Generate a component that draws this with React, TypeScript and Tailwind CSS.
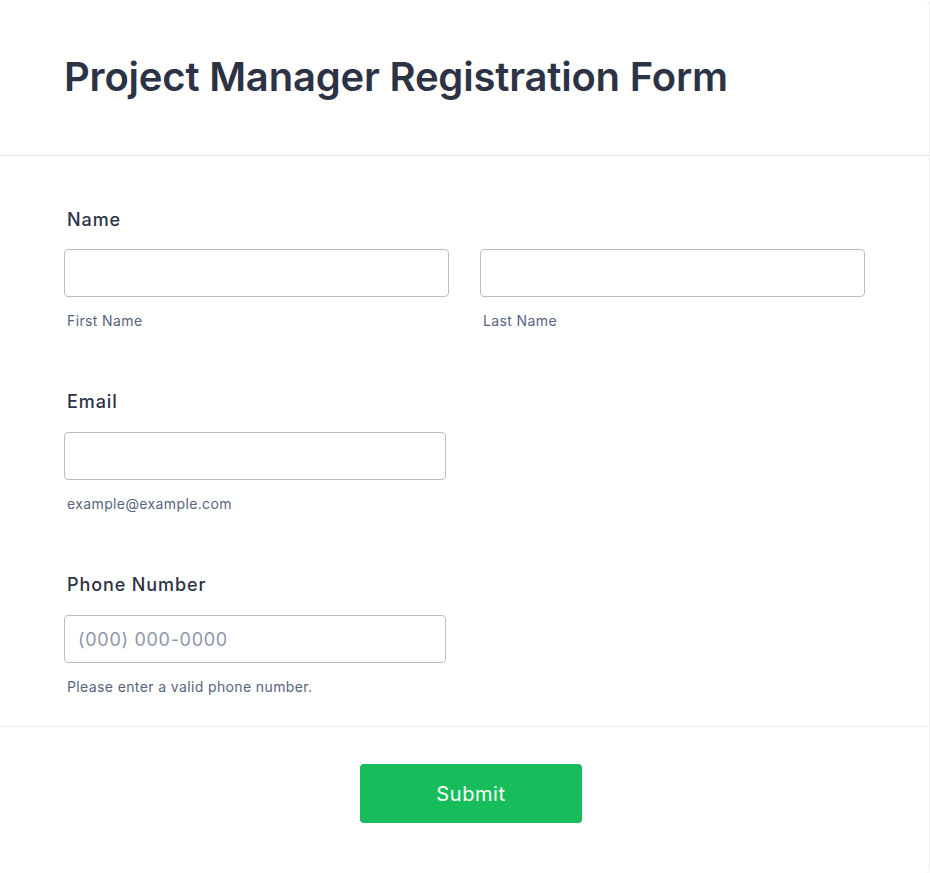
const font = { fontFamily: 'Inter, "Noto Sans", sans-serif' };

function Field({
  label,
  children,
  hint,
}: {
  label: string;
  children: React.ReactNode;
  hint?: string;
}) {
  return (
    <div className="flex flex-col">
      <label className="pl-[3px] text-[18px] leading-[24px] font-medium tracking-[0.9px] text-[#2c3345]">{label}</label>
      <div className="mt-[18px]">{children}</div>
      {hint && <span className="mt-[14px] pl-[3px] text-[14px] leading-[20px] tracking-[0.38px] text-[#57647e]">{hint}</span>}
    </div>
  );
}

function TextInput({ placeholder, className = '' }: { placeholder?: string; className?: string }) {
  return (
    <input
      type="text"
      placeholder={placeholder}
      className={`h-[48px] rounded-[4px] border border-[#b8bdc9] bg-white px-[13px] text-[18px] tracking-[0.7px] text-[#2c3345] placeholder:text-[#8f96a9] outline-none ${className}`}
    />
  );
}

export default function App() {
  return (
    <div className="min-h-[873px] bg-white" style={font}>
      <div className="min-h-[873px] w-[930px] rounded-[4px] border-r border-[#eceef2] bg-white">
        <div className="flex h-[156px] items-center border-b border-[#e3e5ea] px-16">
          <h1 className="pb-[2px] text-[40px] font-semibold tracking-[-0.2px] text-[#2c3345]">
            Project Manager Registration Form
          </h1>
        </div>

        <form className="flex flex-col gap-[59px] border-b border-[#e9ebef] px-16 pt-[52px] pb-[29px]">
          <div className="flex flex-col">
            <label className="pl-[3px] text-[18px] leading-[24px] font-medium tracking-[0.9px] text-[#2c3345]">Name</label>
            <div className="mt-[17px] flex gap-[31px]">
              <div className="flex w-[385px] flex-col">
                <TextInput className="w-full" />
                <span className="mt-[14px] pl-[3px] text-[14px] leading-[20px] tracking-[0.38px] text-[#57647e]">First Name</span>
              </div>
              <div className="flex w-[385px] flex-col">
                <TextInput className="w-full" />
                <span className="mt-[14px] pl-[3px] text-[14px] leading-[20px] tracking-[0.38px] text-[#57647e]">Last Name</span>
              </div>
            </div>
          </div>

          <Field label="Email" hint="example@example.com">
            <TextInput className="w-[382px]" />
          </Field>

          <Field label="Phone Number" hint="Please enter a valid phone number.">
            <TextInput className="w-[382px]" placeholder="(000) 000-0000" />
          </Field>
        </form>

        <div className="pt-[37px] pl-[360px]">
          <button
            type="button"
            className="h-[59px] w-[222px] rounded-[4px] bg-[#18bd5b] text-[20px] font-normal tracking-[0.6px] text-white"
          >
            Submit
          </button>
        </div>
      </div>
    </div>
  );
}
